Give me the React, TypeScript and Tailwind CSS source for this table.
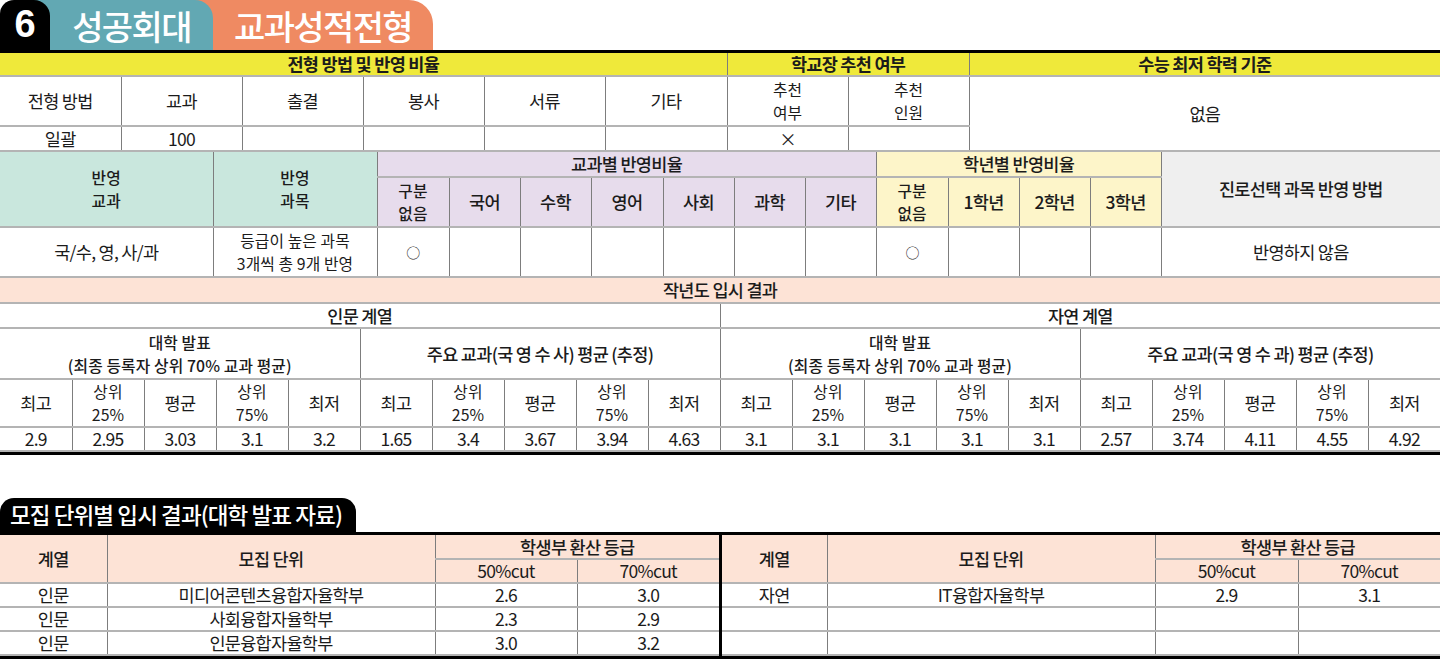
import clsx from "clsx";
import type { ReactNode } from "react";

const FONT = "font-['Noto_Sans_CJK_KR','Noto_Sans',sans-serif]";

function C({
  children,
  className,
  colSpan,
  rowSpan,
  last,
}: {
  children?: ReactNode;
  className?: string;
  colSpan?: number;
  rowSpan?: number;
  last?: boolean;
}) {
  return (
    <td
      colSpan={colSpan}
      rowSpan={rowSpan}
      className={clsx(
        "border-b-2 border-b-[#b4b4b4] p-0 text-center align-middle leading-[22px]",
        !last && "border-r border-r-[#7d7d7d]",
        className,
      )}
    >
      {children}
    </td>
  );
}

// two stacked lines inside one cell
const Two = ({ a, b }: { a: string; b: string }) => (
  <div className="flex flex-col items-center text-[15.8px] leading-[23px] tracking-[0.1px]">
    <span>{a}</span>
    <span>{b}</span>
  </div>
);

const RESULT_COLS = ["최고", "상위|25%", "평균", "상위|75%", "최저"];

const RESULTS = [
  ["2.9", "2.95", "3.03", "3.1", "3.2"],
  ["1.65", "3.4", "3.67", "3.94", "4.63"],
  ["3.1", "3.1", "3.1", "3.1", "3.1"],
  ["2.57", "3.74", "4.11", "4.55", "4.92"],
];

const UNITS_LEFT = [
  ["인문", "미디어콘텐츠융합자율학부", "2.6", "3.0"],
  ["인문", "사회융합자율학부", "2.3", "2.9"],
  ["인문", "인문융합자율학부", "3.0", "3.2"],
];

const UNITS_RIGHT = [
  ["자연", "IT융합자율학부", "2.9", "3.1"],
  ["", "", "", ""],
  ["", "", "", ""],
];

function UnitTable({ rows, widths, side }: { rows: string[][]; widths: number[]; side: "l" | "r" }) {
  const head = "bg-[#fde3d6] font-medium";
  return (
    <table className={clsx("table-fixed border-collapse", side === "l" ? "w-[719px]" : "w-[718px]")}>
      <colgroup>
        {widths.map((w, i) => (
          <col key={i} style={{ width: w }} />
        ))}
      </colgroup>
      <tbody>
        <tr className="h-[24px]">
          <C rowSpan={2} className={head}>계열</C>
          <C rowSpan={2} className={head}>모집 단위</C>
          <C colSpan={2} last className={clsx(head, "border-b border-b-[#555]")}>학생부 환산 등급</C>
        </tr>
        <tr className="h-[24px]">
          <C className="bg-[#fde3d6]">50%cut</C>
          <C last className="bg-[#fde3d6]">70%cut</C>
        </tr>
        {rows.map((r, i) => (
          <tr key={i} className="h-[24px]">
            {r.map((v, j) => (
              <C key={j} last={j === 3} className={i === rows.length - 1 ? "border-b-0" : ""}>
                {v}
              </C>
            ))}
          </tr>
        ))}
      </tbody>
    </table>
  );
}

export default function App() {
  return (
    <div className={clsx("h-[664px] w-[1440px] overflow-hidden bg-white text-[17.5px] tracking-[-0.7px] text-[#1b1b1b]", FONT)}>
      {/* title tabs */}
      <div className="flex h-[50px]">
        <div className="relative z-30 flex w-[50px] items-center justify-center rounded-tl-[14px] rounded-tr-[16px] bg-black pb-[2px] font-['Liberation_Sans',sans-serif] text-[38px] font-bold tracking-normal text-white">
          6
        </div>
        <div className="relative z-20 -ml-[16px] flex w-[179px] items-center justify-center rounded-tr-[18px] bg-[#62a8b3] pl-[16px] text-[34px] font-medium tracking-[-1.6px] text-white">
          성공회대
        </div>
        <div className="relative z-10 -ml-[18px] flex w-[238px] items-center justify-center rounded-tr-[24px] bg-[#ef8a62] pl-[18px] text-[34px] font-medium tracking-[-1.6px] text-white">
          교과성적전형
        </div>
      </div>

      <div className="border-y-[3px] border-black">
        {/* 전형 방법 */}
        <table className="w-[1440px] table-fixed border-collapse">
          <colgroup>
            <col className="w-[121px]" />
            <col className="w-[121px]" />
            <col className="w-[121px]" />
            <col className="w-[121px]" />
            <col className="w-[121px]" />
            <col className="w-[122px]" />
            <col className="w-[121px]" />
            <col className="w-[121px]" />
            <col />
          </colgroup>
          <tbody>
            <tr className="h-[23px] bg-[#efe93a] font-bold">
              <C colSpan={6}>전형 방법 및 반영 비율</C>
              <C colSpan={2}>학교장 추천 여부</C>
              <C last>수능 최저 학력 기준</C>
            </tr>
            <tr className="h-[50px]">
              <C>전형 방법</C>
              <C>교과</C>
              <C>출결</C>
              <C>봉사</C>
              <C>서류</C>
              <C>기타</C>
              <C><Two a="추천" b="여부" /></C>
              <C><Two a="추천" b="인원" /></C>
              <C rowSpan={2} last>없음</C>
            </tr>
            <tr className="h-[25px]">
              <C>일괄</C>
              <C>100</C>
              <C />
              <C />
              <C />
              <C />
              <C>×</C>
              <C />
            </tr>
          </tbody>
        </table>

        {/* 반영 교과 */}
        <table className="w-[1440px] table-fixed border-collapse">
          <colgroup>
            <col className="w-[213px]" />
            <col className="w-[164px]" />
            <col className="w-[72px]" />
            <col className="w-[71px]" />
            <col className="w-[71px]" />
            <col className="w-[72px]" />
            <col className="w-[71px]" />
            <col className="w-[71px]" />
            <col className="w-[71px]" />
            <col className="w-[72px]" />
            <col className="w-[71px]" />
            <col className="w-[71px]" />
            <col className="w-[71px]" />
            <col />
          </colgroup>
          <tbody>
            <tr className="h-[25px] font-medium">
              <C rowSpan={2} className="bg-[#c9e7dd]"><Two a="반영" b="교과" /></C>
              <C rowSpan={2} className="bg-[#c9e7dd]"><Two a="반영" b="과목" /></C>
              <C colSpan={7} className="bg-[#e7dcec]">교과별 반영비율</C>
              <C colSpan={4} className="bg-[#fdf5c9]">학년별 반영비율</C>
              <C rowSpan={2} last className="bg-[#efefef]">진로선택 과목 반영 방법</C>
            </tr>
            <tr className="h-[50px] font-medium">
              <C className="bg-[#e7dcec]"><Two a="구분" b="없음" /></C>
              {["국어", "수학", "영어", "사회", "과학", "기타"].map((s) => (
                <C key={s} className="bg-[#e7dcec]">{s}</C>
              ))}
              <C className="bg-[#fdf5c9]"><Two a="구분" b="없음" /></C>
              {["1학년", "2학년", "3학년"].map((s) => (
                <C key={s} className="bg-[#fdf5c9]">{s}</C>
              ))}
            </tr>
            <tr className="h-[50px]">
              <C>국/수, 영, 사/과</C>
              <C><Two a="등급이 높은 과목" b="3개씩 총 9개 반영" /></C>
              <C className="text-[14px]">○</C>
              <C />
              <C />
              <C />
              <C />
              <C />
              <C />
              <C className="text-[14px]">○</C>
              <C />
              <C />
              <C />
              <C last>반영하지 않음</C>
            </tr>
          </tbody>
        </table>

        {/* 작년도 입시 결과 */}
        <table className="w-[1440px] table-fixed border-collapse">
          <colgroup>
            {Array.from({ length: 20 }, (_, i) => (
              <col key={i} className="w-[72px]" />
            ))}
          </colgroup>
          <tbody>
            <tr className="h-[25px] bg-[#fde3d6] font-medium">
              <C colSpan={20} last className="border-b border-b-[#555]">작년도 입시 결과</C>
            </tr>
            <tr className="h-[25px] font-medium">
              <C colSpan={10}>인문 계열</C>
              <C colSpan={10} last>자연 계열</C>
            </tr>
            <tr className="h-[51px] font-medium">
              <C colSpan={5}><Two a="대학 발표" b="(최종 등록자 상위 70% 교과 평균)" /></C>
              <C colSpan={5}>주요 교과(국 영 수 사) 평균 (추정)</C>
              <C colSpan={5}><Two a="대학 발표" b="(최종 등록자 상위 70% 교과 평균)" /></C>
              <C colSpan={5} last>주요 교과(국 영 수 과) 평균 (추정)</C>
            </tr>
            <tr className="h-[48px]">
              {[0, 1, 2, 3].flatMap((g) =>
                RESULT_COLS.map((s, i) => {
                  const [a, b] = s.split("|");
                  return (
                    <C key={`${g}-${i}`} last={g === 3 && i === 4}>
                      {b ? <Two a={a} b={b} /> : a}
                    </C>
                  );
                }),
              )}
            </tr>
            <tr className="h-[23px]">
              {RESULTS.flatMap((row, g) =>
                row.map((v, i) => (
                  <C key={`${g}-${i}`} last={g === 3 && i === 4} className="border-b-0">
                    {v}
                  </C>
                )),
              )}
            </tr>
          </tbody>
        </table>
      </div>

      {/* 모집 단위별 입시 결과 */}
      <div className="mt-[43px] flex h-[34px] w-[356px] items-center rounded-t-[14px] bg-black pl-[10px] text-[22.5px] font-medium tracking-[-0.9px] text-white">
        모집 단위별 입시 결과(대학 발표 자료)
      </div>
      <div className="flex border-y-[3px] border-black">
        <UnitTable rows={UNITS_LEFT} widths={[107, 328, 142, 142]} side="l" />
        <div className="w-[3px] shrink-0 bg-black" />
        <UnitTable rows={UNITS_RIGHT} widths={[105, 328, 143, 142]} side="r" />
      </div>
    </div>
  );
}
